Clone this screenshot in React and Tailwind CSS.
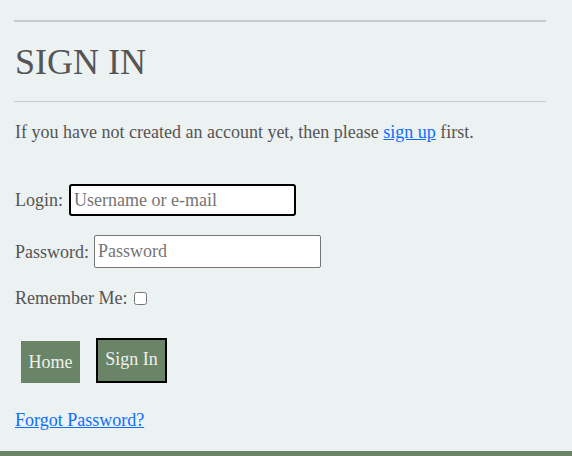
import React from "react";

export default function App() {
  return (
    <div className="min-h-screen bg-[#ecf1f1] text-[#555555] font-['Liberation_Serif',serif] flex flex-col">
      {/* Main content */}
      <div className="w-[532px] ml-[14px] pt-[20px]">
        <hr className="border-0 border-t-2 border-[#c6cbcb]" />
        <h1 className="mt-[20px] ml-px text-[36px] leading-[40px] font-normal">SIGN IN</h1>
        <hr className="mt-[19px] border-0 border-t border-[#c6cbcb]" />
        <p className="mt-[20px] ml-px text-[18px] leading-[20px]">
          If you have not created an account yet, then please{" "}
          <a href="#" className="text-[#0d6efd] underline">
            sign up
          </a>{" "}
          first.
        </p>

        <form className="ml-px flex flex-col text-[18px] leading-[20px]">
          <div className="mt-[42px] flex items-center">
            <label>Login:</label>
            <input
              type="text"
              placeholder="Username or e-mail"
              className="ml-[6px] w-[227px] h-[32px] px-[3px] bg-white border-2 border-black rounded-[3px] outline-none text-[18px] placeholder:text-[#757575]"
            />
          </div>
          <div className="mt-[19px] flex items-center">
            <label>Password:</label>
            <input
              type="password"
              placeholder="Password"
              className="ml-[5px] w-[227px] h-[33px] px-[3px] bg-white border border-[#767676] rounded-[2px] outline-none text-[18px] placeholder:text-[#757575]"
            />
          </div>
          <div className="mt-[20px] flex items-center">
            <label>Remember Me:</label>
            <input type="checkbox" className="ml-[7px] w-[13px] h-[13px]" />
          </div>
          <div className="mt-[30px] flex items-end">
            <button
              type="button"
              className="ml-[6px] w-[59px] h-[42px] bg-[#6a8467] text-[#eef1ee] text-[18px]"
            >
              Home
            </button>
            <button
              type="submit"
              className="ml-[16px] w-[71px] h-[45px] pb-[3px] bg-[#6a8467] text-[#eef1ee] text-[18px] border-2 border-black"
            >
              Sign In
            </button>
          </div>
        </form>

        <a href="#" className="mt-[27px] ml-px block w-fit text-[18px] leading-[20px] text-[#0d6efd] underline">
          Forgot Password?
        </a>
      </div>

      {/* Footer */}
      <footer className="mt-auto h-[5px] bg-[#6a8467]" />
    </div>
  );
}
